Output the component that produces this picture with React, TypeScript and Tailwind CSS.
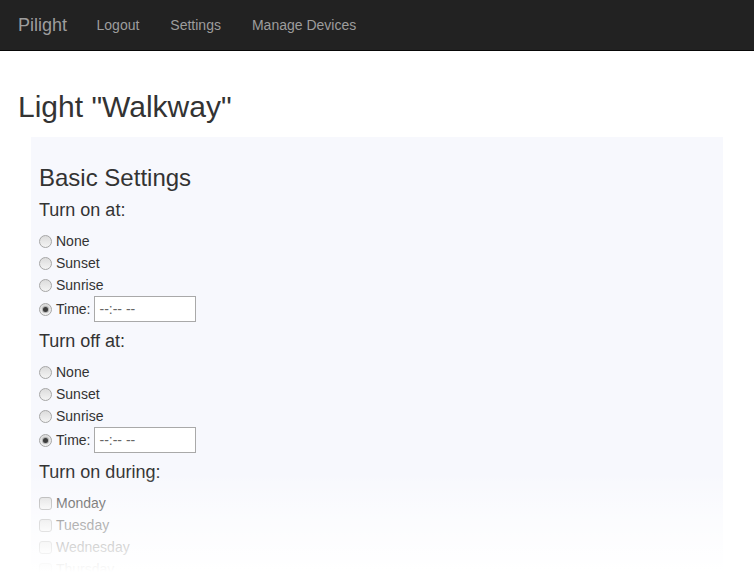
import React from "react";

const font = { fontFamily: '"Liberation Sans", Arial, sans-serif' };

function Radio({ checked }: { checked?: boolean }) {
    return (
        <span className="relative inline-flex h-[13px] w-[13px] shrink-0 items-center justify-center rounded-full border border-[#a6a6a6] bg-gradient-to-b from-[#dcdcdc] to-[#f4f4f4]">
            {checked && <span className="h-[5px] w-[5px] rounded-full bg-[#3c3c3c] shadow-[0_0_1px_1px_rgba(60,60,60,0.35)]" />}
        </span>
    );
}

function Checkbox() {
    return (
        <span className="inline-block h-[13px] w-[13px] shrink-0 rounded-[3px] border border-[#a6a6a6] bg-gradient-to-b from-[#dcdcdc] to-[#f4f4f4]" />
    );
}

function TimeBlock({ title }: { title: string }) {
    return (
        <div>
            <h4 className="mt-[9px] mb-[10px] text-[18px] leading-[20px] text-[#333]">{title}</h4>
            <div className="text-[14px] text-[#333]">
                {["None", "Sunset", "Sunrise"].map((o) => (
                    <label key={o} className="flex h-[22px] items-center">
                        <Radio />
                        <span className="ml-[4px]">{o}</span>
                    </label>
                ))}
                <label className="flex h-[26px] items-center">
                    <Radio checked />
                    <span className="ml-[4px]">Time:</span>
                    <input
                        readOnly
                        value="--:-- --"
                        className="ml-[4px] h-[26px] w-[102px] border border-[#a9a9a9] bg-white px-[4px] text-[14px] text-[#666] outline-none"
                    />
                </label>
            </div>
        </div>
    );
}

export default function App() {
    return (
        <main style={font} className="relative h-[572px] overflow-hidden bg-white">
            <nav className="flex h-[51px] items-center border-b border-[#080808] bg-[#222] text-[#9d9d9d]">
                <span className="pl-[18px] pr-[14px] text-[18px]">Pilight</span>
                <a className="px-[15.5px] text-[14px]">Logout</a>
                <a className="px-[15.5px] text-[14px]">Settings</a>
                <a className="px-[15.5px] text-[14px]">Manage Devices</a>
            </nav>

            <h2 className="mt-[39px] ml-[18px] text-[30px] leading-[33px] text-[#333]">Light "Walkway"</h2>

            <section className="mt-[14px] ml-[31px] w-[692px] bg-[#f7f8fd] px-[8px] pt-[28px] pb-[40px]">
                <h3 className="text-[24px] leading-[26.4px] text-[#333]">Basic Settings</h3>
                <TimeBlock title="Turn on at:" />
                <TimeBlock title="Turn off at:" />
                <div>
                    <h4 className="mt-[9px] mb-[10px] text-[18px] leading-[20px] text-[#333]">Turn on during:</h4>
                    <div className="text-[14px] text-[#333]">
                        {["Monday", "Tuesday", "Wednesday", "Thursday", "Friday"].map((d) => (
                            <label key={d} className="flex h-[22px] items-center">
                                <Checkbox />
                                <span className="ml-[4px]">{d}</span>
                            </label>
                        ))}
                    </div>
                </div>
            </section>

            <div className="pointer-events-none absolute inset-x-0 bottom-0 h-[100px] bg-gradient-to-b from-white/0 via-white/60 to-white" />
        </main>
    );
}
